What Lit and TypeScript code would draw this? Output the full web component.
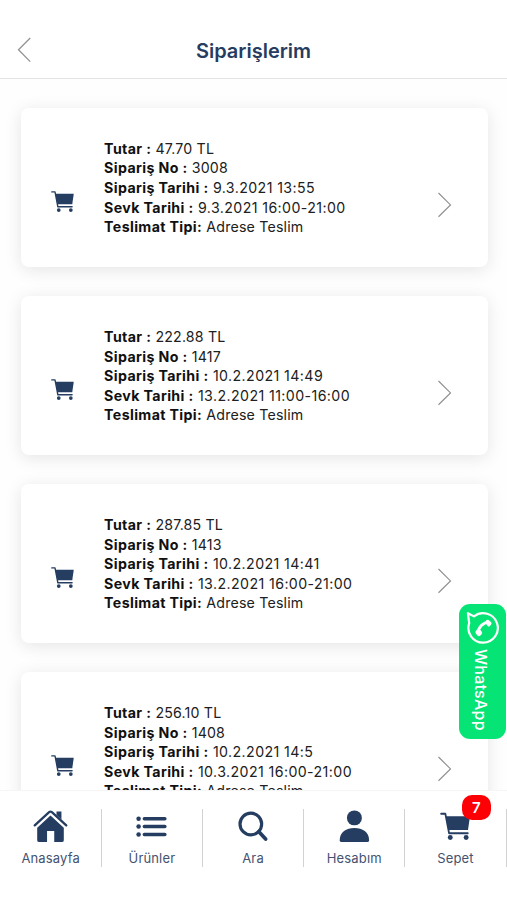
import { LitElement, html, svg, css } from "lit";
import { customElement } from "lit/decorators.js";

interface Order {
  total: string;
  no: string;
  date: string;
  shipping: string;
  delivery: string;
}

const orders: Order[] = [
  { total: "47.70 TL", no: "3008", date: "9.3.2021 13:55", shipping: "9.3.2021 16:00-21:00", delivery: "Adrese Teslim" },
  { total: "222.88 TL", no: "1417", date: "10.2.2021 14:49", shipping: "13.2.2021 11:00-16:00", delivery: "Adrese Teslim" },
  { total: "287.85 TL", no: "1413", date: "10.2.2021 14:41", shipping: "13.2.2021 16:00-21:00", delivery: "Adrese Teslim" },
  { total: "256.10 TL", no: "1408", date: "10.2.2021 14:5", shipping: "10.3.2021 16:00-21:00", delivery: "Adrese Teslim" },
];

const cartShape = svg`
  <path d="M0.9 1.2H5.2L9 21H28" fill="none" stroke="currentColor" stroke-width="1.8" stroke-linejoin="round" stroke-linecap="round"/>
  <path d="M5.8 3.8H30.2L28.2 17.8H8.3Z" fill="currentColor"/>
  <circle cx="10.2" cy="25.4" r="2.5" fill="currentColor"/>
  <circle cx="26.3" cy="25.4" r="2.5" fill="currentColor"/>`;

const cart = html`<svg class="cart" viewBox="0 0 30.4 28">${cartShape}</svg>`;

const home = html`<svg width="35" height="33" viewBox="0 0 35 33" fill="currentColor">
  <path d="M23.6 1.6H28.6V9.6L23.6 5.2Z"/>
  <path d="M1.5 15.6L16.1 2.2Q17.5 1.1 18.9 2.2L33.5 15.6" fill="none" stroke="currentColor" stroke-width="2.3" stroke-linecap="round" stroke-linejoin="round"/>
  <path d="M17.5 5.6L31 18V30.6Q31 32.6 29 32.6H21.3V21.2H14V32.6H6Q4 32.6 4 30.6V18Z"/>
</svg>`;

const list = html`<svg width="31" height="33" viewBox="0 0 31 33">
  <g fill="currentColor"><circle cx="2.4" cy="8.8" r="2.3"/><circle cx="2.4" cy="16.8" r="2.3"/><circle cx="2.4" cy="24.8" r="2.3"/></g>
  <path d="M8.2 8.8H29.1M8.2 16.8H29.1M8.2 24.8H29.1" stroke="currentColor" stroke-width="3.5" stroke-linecap="round"/>
</svg>`;

const search = html`<svg width="30" height="33" viewBox="0 0 30 33" fill="none" stroke="currentColor" stroke-linecap="round">
  <circle cx="12.8" cy="14.2" r="11" stroke-width="3.2"/>
  <path d="M21 22L27.8 29.5" stroke-width="3.7"/>
</svg>`;

const person = html`<svg width="31" height="33" viewBox="0 0 31 33" fill="currentColor">
  <circle cx="15.4" cy="8" r="7.6"/>
  <path d="M0.5 30.6C0.5 22.5 7.2 18.4 15.4 18.4S30.3 22.5 30.3 30.6Q30.3 32.5 28.4 32.5H2.4Q0.5 32.5 0.5 30.6Z"/>
</svg>`;

const basket = html`<svg width="31" height="33" viewBox="0 -2.6 31 33">${cartShape}</svg>`;

const tabs = [
  { label: "Anasayfa", icon: home },
  { label: "Ürünler", icon: list },
  { label: "Ara", icon: search },
  { label: "Hesabım", icon: person },
  { label: "Sepet", icon: basket, badge: 7 },
];

@customElement("order-card")
class OrderCard extends LitElement {
  static properties = { order: { attribute: false } };
  declare order: Order;

  static styles = css`
    :host {
      display: grid;
      grid-template-columns: 83.6px 1fr 49.9px;
      box-sizing: border-box;
      height: 159.3px;
      border-radius: 8px;
      background: #fff;
      box-shadow: 0 3px 17px rgba(0, 0, 0, 0.1);
    }
    .icon { padding: 83.2px 0 0 30.5px; color: #243d61; }
    .cart { display: block; width: 23px; height: 21px; }
    .lines { padding-top: 30.9px; font-size: 14.2px; line-height: 19.55px; color: #202020; white-space: nowrap; letter-spacing: 0.18px; }
    b { color: #101010; font-weight: 700; letter-spacing: 0.36px; }
    .time { letter-spacing: 0.4px; }
    .arrow { padding-top: 84px; }
    .arrow svg { display: block; }
  `;

  render() {
    const o = this.order;
    return html`
      <div class="icon">${cart}</div>
      <div class="lines">
        <div><b>Tutar :</b> ${o.total}</div>
        <div><b>Sipariş No :</b> ${o.no}</div>
        <div class="time"><b>Sipariş Tarihi :</b> ${o.date}</div>
        <div class="time"><b>Sevk Tarihi :</b> ${o.shipping}</div>
        <div><b>Teslimat Tipi:</b> ${o.delivery}</div>
      </div>
      <div class="arrow">
        <svg width="15" height="26" viewBox="0 0 15 26" fill="none" stroke="#929292" stroke-width="1.2">
          <path d="M0.5 1L12.5 12.9L0.5 24.8"/>
        </svg>
      </div>`;
  }
}

@customElement("app-root")
class AppRoot extends LitElement {
  static styles = css`
    :host {
      display: flex;
      flex-direction: column;
      position: relative;
      height: 900px;
      width: 507px;
      overflow: hidden;
      background: #fff;
      font-family: Inter, "Liberation Sans", sans-serif;
    }
    header {
      display: grid;
      grid-template-columns: 60px 1fr 60px;
      flex: none;
      box-sizing: border-box;
      height: 79px;
      padding-top: 37px;
      border-bottom: 1px solid #e4e4e4;
    }
    .back { display: block; margin-left: 17px; }
    h1 { margin: 0; text-align: center; font-size: 20px; line-height: 28px; font-weight: 600; color: #263c60; }
    main {
      display: flex;
      flex-direction: column;
      gap: 28.8px;
      flex: 1;
      min-height: 0;
      overflow: hidden;
      padding: 29px 19.5px 0 20.5px;
      background: #fefefe;
    }
    order-card { flex: none; }
    nav {
      display: grid;
      grid-template-columns: repeat(5, 101.2px);
      flex: none;
      height: 110px;
      box-sizing: border-box;
      padding: 18px 0 0 0.6px;
      background: #fff;
      color: #243d61;
      border-top: 1px solid #f5f5f5;
    }
    .tab {
      display: flex;
      flex-direction: column;
      align-items: center;
      position: relative;
      box-sizing: border-box;
      height: 58px;
      padding-top: 1px;
      border-right: 1.5px solid #d2d2d2;
    }
    .tab svg { display: block; }
    .label { margin-top: 6.5px; font-size: 13px; line-height: 18px; letter-spacing: 0.15px; color: #44536f; }
    .badge {
      position: absolute;
      left: 56.6px;
      top: -14px;
      width: 29px;
      height: 25px;
      border-radius: 10px;
      background: #fd0006;
      color: #fff;
      text-align: center;
      font-size: 15px;
      line-height: 25px;
      font-weight: 600;
    }
    .whatsapp {
      position: absolute;
      left: 459px;
      top: 604px;
      width: 47px;
      height: 135px;
      box-sizing: border-box;
      display: flex;
      flex-direction: column;
      align-items: center;
      padding-top: 7px;
      border-radius: 11px;
      background: #06e475;
      color: #fff;
    }
    .whatsapp svg { display: block; flex: none; }
    .whatsapp span { writing-mode: vertical-rl; margin-top: 4px; margin-right: 3px; font-size: 16px; line-height: 20px; font-weight: 500; letter-spacing: 0.25px; }
  `;

  render() {
    return html`
      <header>
        <svg class="back" width="15" height="26" viewBox="0 0 15 26" fill="none" stroke="#929292" stroke-width="1.3">
          <path d="M13.2 1L1.5 12.8L13.2 24.6"/>
        </svg>
        <h1>Siparişlerim</h1>
      </header>
      <main>${orders.map((o) => html`<order-card .order=${o}></order-card>`)}</main>
      <nav>
        ${tabs.map((t) => html`
          <div class="tab">
            ${t.icon}
            <span class="label">${t.label}</span>
            ${t.badge ? html`<span class="badge">${t.badge}</span>` : null}
          </div>`)}
      </nav>
      <div class="whatsapp">
        <svg width="34" height="34" viewBox="0 0 34 34">
          <path d="M8 5.4A14.7 14.7 0 1 1 3.2 12.2L1.9 2.2L8 5.4Z" fill="none" stroke="#fff" stroke-width="2.2" stroke-linejoin="round"/>
          <path d="M22.6 10.8C16.8 11.6 12 16.6 11.8 22.6" fill="none" stroke="#fff" stroke-width="2.8"/>
          <path d="M20 9.6Q21.4 8.2 22.9 9.2L25 11Q26.2 12.4 25 13.8L23.7 15.2Q22.7 15.9 21.6 14.9L19.8 12.6ZM11.4 18.3Q12.8 17.4 14 18.6L15.8 20.8Q16.6 22 15.6 23.2L14.2 24.7Q12.8 25.7 11.4 24.5L9.8 22.6Q8.9 21 9.9 19.7Z" fill="#fff"/>
        </svg>
        <span>WhatsApp</span>
      </div>`;
  }
}
